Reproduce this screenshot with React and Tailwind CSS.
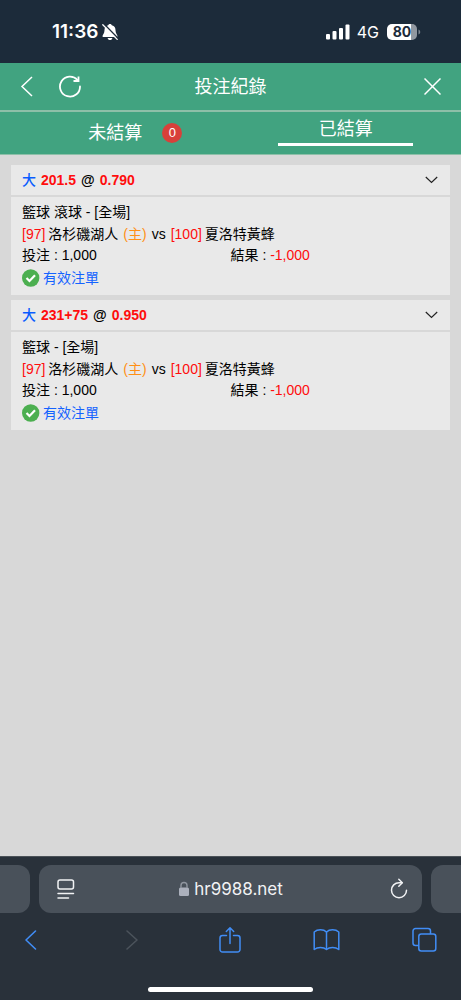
import { useState } from "react";

const bets = [
  {
    id: 1,
    pick: "大",
    line: "201.5",
    odds: "0.790",
    game: "籃球 滾球 - [全場]",
    home: "洛杉磯湖人",
    homeScore: "[97]",
    away: "夏洛特黃蜂",
    awayScore: "[100]",
    stake: "1,000",
    result: "-1,000",
  },
  {
    id: 2,
    pick: "大",
    line: "231+75",
    odds: "0.950",
    game: "籃球 - [全場]",
    home: "洛杉磯湖人",
    homeScore: "[97]",
    away: "夏洛特黃蜂",
    awayScore: "[100]",
    stake: "1,000",
    result: "-1,000",
  },
];

function StatusBar() {
  return (
    <div className="flex h-[63px] items-center justify-between bg-[#1c2b3a] pl-[52px] pr-10 font-['Inter',sans-serif] text-white">
      <div className="flex items-center gap-1">
        <span className="text-[19px] font-semibold leading-5">11:36</span>
        {/* Silent bell */}
        <svg width="16" height="18" viewBox="0 0 16 18">
          <path
            d="M8 1C7 1 6.400 1.600 6.200 2.300C3.500 3 2.500 4.900 2.500 7.200C2.500 10.400 0.800 11.600 0.500 13C0.500 13.700 0.800 14 1.500 14H14.500C15.200 14 15.500 13.700 15.500 13C15.200 11.600 13.500 10.400 13.500 7.200C13.500 4.900 12.500 3 9.800 2.300C9.600 1.600 9 1 8 1Z"
            fill="currentColor"
          />
          <path d="M5.600 15H10.400C10.100 16.400 9.200 17 8 17C6.800 17 5.900 16.400 5.600 15Z" fill="currentColor" />
          <path d="M1.800 0.800L16 15.200" stroke="#1c2b3a" strokeWidth="1.500" />
          <path d="M0.800 1.800L15.200 16.400" stroke="currentColor" strokeWidth="1.300" strokeLinecap="round" />
        </svg>
      </div>
      <div className="flex items-center">
        <svg width="24" height="16" viewBox="0 0 24 16" fill="currentColor">
          <rect x="0" y="10" width="4" height="5.500" rx="1" />
          <rect x="6.500" y="7" width="4" height="8.500" rx="1" />
          <rect x="13" y="4" width="4" height="11.500" rx="1" />
          <rect x="19.500" y="0.500" width="4" height="15" rx="1" />
        </svg>
        <span className="ml-[7px] text-[16px] leading-5">4G</span>
        <div className="ml-2 flex h-4 w-[30px] items-center justify-center rounded-[5px] bg-linear-to-r from-white from-80% to-[#9198a0] to-80% text-[14px] font-bold leading-4 text-[#1c2b3a]">
          80
        </div>
        <svg className="ml-px" width="3" height="6" viewBox="0 0 3 6">
          <path d="M0.500 0.500C2.800 1.500 2.800 4.500 0.500 5.500Z" fill="#7d868f" />
        </svg>
      </div>
    </div>
  );
}

function TopBar() {
  return (
    <header className="grid h-[49px] grid-cols-3 items-center border-b-2 border-[#8dbfa8] bg-[#41a380] px-5 text-white">
      <div className="flex items-center gap-6">
        <button type="button" aria-label="返回">
          <svg width="14" height="24" viewBox="0 0 14 24" fill="none" stroke="currentColor" strokeWidth="1.500">
            <path d="M12 2L2 11.500L12 21" />
          </svg>
        </button>
        <button type="button" aria-label="重新整理">
          <svg width="24" height="24" viewBox="0 0 24 24" fill="none" stroke="currentColor" strokeWidth="1.800">
            <path d="M22 11.500A10 10 0 1 1 19.500 5" strokeLinecap="round" />
            <path d="M20.500 1.500V6H15.500" />
          </svg>
        </button>
      </div>
      <h1 className="whitespace-nowrap text-center text-[18px] leading-6">投注紀錄</h1>
      <button type="button" aria-label="關閉" className="justify-self-end">
        <svg width="17" height="18" viewBox="0 0 17 18" fill="none" stroke="currentColor" strokeWidth="1.500">
          <path d="M0.500 0.500L16.500 16.500M16.500 0.500L0.500 16.500" />
        </svg>
      </button>
    </header>
  );
}

function Tabs({ active, onChange }) {
  return (
    <nav className="grid h-[43px] grid-cols-2 border-b border-[#8dbfa8] bg-[#41a380] text-[18px] leading-6 text-white">
      <button type="button" onClick={() => onChange("open")} className="flex flex-col items-center pt-[9px]">
        <span className="relative">
          未結算
          <span className="absolute left-full top-0.5 ml-5 flex size-5 items-center justify-center rounded-full bg-[#d8403a] text-[13px] leading-5">
            0
          </span>
        </span>
        {active === "open" && <span className="h-[3px] w-[135px] bg-white" />}
      </button>
      <button type="button" onClick={() => onChange("settled")} className="flex flex-col items-center gap-0.5 pt-[5px]">
        <span>已結算</span>
        {active === "settled" && <span className="h-[3px] w-[135px] bg-white" />}
      </button>
    </nav>
  );
}

function BetCard({ bet }) {
  const [open, setOpen] = useState(true);

  return (
    <article className="text-[14px] text-black">
      <button
        type="button"
        onClick={() => setOpen(!open)}
        className="flex h-[30px] w-full items-center justify-between bg-[#e9e9e9] pl-[11px] pr-3"
      >
        <span className="flex gap-[5px] font-bold leading-5">
          <span className="font-medium text-[#0a5cff]">{bet.pick}</span>
          <span className="text-[#ff0d0d]">{bet.line}</span>
          <span>@</span>
          <span className="text-[#ff0d0d]">{bet.odds}</span>
        </span>
        <svg width="13" height="8" viewBox="0 0 13 8" fill="none" stroke="#222" strokeWidth="1.200">
          <path d="M0.800 1L6.500 6.500L12.200 1" />
        </svg>
      </button>
      {open && (
        <div className="mt-0.5 bg-[#e9e9e9] px-[11px] pb-[5px] pt-1">
          <p className="leading-[22px]">{bet.game}</p>
          <p className="flex leading-[22px]">
            <span className="mr-[3px] text-[#ff0d0d]">{bet.homeScore}</span>
            <span>{bet.home}</span>
            <span className="mx-[5px] text-[#ff9016]">(主)</span>
            <span>vs</span>
            <span className="ml-[5px] mr-[3px] text-[#ff0d0d]">{bet.awayScore}</span>
            <span>{bet.away}</span>
          </p>
          <div className="grid grid-cols-2 leading-[21px]">
            <p>投注 : {bet.stake}</p>
            <p>
              結果 : <span className="text-[#ff0d0d]">{bet.result}</span>
            </p>
          </div>
          <div className="flex h-6 items-center gap-[3px] text-[#1463ff]">
            <svg width="18" height="18" viewBox="0 0 18 18">
              <circle cx="8.700" cy="9" r="8.700" fill="#4caf50" />
              <path d="M4.500 9L7.500 12L13 6.300" fill="none" stroke="#fff" strokeWidth="2.200" />
            </svg>
            <span className="leading-[22px]">有效注單</span>
          </div>
        </div>
      )}
    </article>
  );
}

function BrowserBar() {
  return (
    <footer className="border-t border-[#4b5258] bg-[#29313a] pb-2 pt-2 font-['Inter',sans-serif]">
      {/* Address bar with the edges of the neighbouring tabs */}
      <div className="flex h-12 gap-[9px]">
        <div className="w-[30px] shrink-0 rounded-r-xl bg-[#49515a]" />
        <div className="grid flex-1 grid-cols-[1fr_auto_1fr] items-center rounded-xl bg-[#49515a] px-[14px] text-[#f1f2f4]">
          <button type="button" aria-label="頁面選單" className="justify-self-start">
            <svg width="24" height="24" viewBox="0 0 24 24" fill="none" stroke="currentColor" strokeWidth="1.500" strokeLinecap="round">
              <rect x="5" y="3" width="15.500" height="9" rx="2" />
              <path d="M5 16.500H20.500M5 21H15.500" />
            </svg>
          </button>
          <div className="flex items-center gap-1">
            <svg width="12" height="16" viewBox="0 0 12 16">
              <rect x="1" y="6.500" width="10" height="8.500" rx="1.500" fill="#abb0bc" />
              <path d="M3 7V4.500C3 0.500 9 0.500 9 4.500V7" fill="none" stroke="#8f959f" strokeWidth="1.400" />
            </svg>
            <span className="text-[17px] leading-6">hr9988.net</span>
          </div>
          <button type="button" aria-label="重新載入" className="justify-self-end">
            <svg width="18" height="22" viewBox="0 0 18 22" fill="none" stroke="currentColor" strokeWidth="1.500" strokeLinecap="round" strokeLinejoin="round">
              <path d="M12 4.700H9A7.500 7.500 0 1 0 16.500 12.200" />
              <path d="M8.800 1.200L12.300 4.700L8.800 8.200" />
            </svg>
          </button>
        </div>
        <div className="w-[30px] shrink-0 rounded-l-xl bg-[#49515a]" />
      </div>

      {/* Toolbar */}
      <div className="flex h-[54px] items-center justify-between px-6 text-[#418df5]">
        <button type="button" aria-label="上一頁">
          <svg width="14" height="24" viewBox="0 0 14 24" fill="none" stroke="currentColor" strokeWidth="1.600" strokeLinecap="round" strokeLinejoin="round">
            <path d="M11.500 3L2 12L11.500 21" />
          </svg>
        </button>
        <button type="button" aria-label="下一頁" className="ml-4 text-[#4b535b]">
          <svg width="14" height="24" viewBox="0 0 14 24" fill="none" stroke="currentColor" strokeWidth="1.600" strokeLinecap="round" strokeLinejoin="round">
            <path d="M2 3L12 12L2 21" />
          </svg>
        </button>
        <button type="button" aria-label="分享" className="ml-2">
          <svg width="24" height="28" viewBox="0 0 24 28" fill="none" stroke="currentColor" strokeWidth="1.500" strokeLinecap="round" strokeLinejoin="round">
            <path d="M8.500 9.500H4.500A2.500 2.500 0 0 0 2 12V23.500A2.500 2.500 0 0 0 4.500 26H19.500A2.500 2.500 0 0 0 22 23.500V12A2.500 2.500 0 0 0 19.500 9.500H15.500" />
            <path d="M12 17.500V2M8.300 5.500L12 1.800L15.700 5.500" />
          </svg>
        </button>
        <button type="button" aria-label="書籤">
          <svg width="28" height="24" viewBox="0 0 28 24" fill="none" stroke="currentColor" strokeWidth="1.500" strokeLinejoin="round">
            <path d="M14.500 4C11.500 1 5.500 1 2.200 4V21.500C5.500 18.800 11.500 18.800 14.500 21.500C17.500 18.800 23.500 18.800 26.800 21.500V4C23.500 1 17.500 1 14.500 4Z" />
            <path d="M14.500 4V21.500" />
          </svg>
        </button>
        <button type="button" aria-label="分頁">
          <svg width="26" height="26" viewBox="0 0 26 26" fill="none" stroke="currentColor" strokeWidth="1.500">
            <rect x="7.800" y="7" width="17" height="17" rx="2.500" />
            <path d="M7.800 18.500H4.500A2.500 2.500 0 0 1 2 16V4A2.500 2.500 0 0 1 4.500 1.500H17A2.500 2.500 0 0 1 19.500 4V7" />
          </svg>
        </button>
      </div>
      <div className="mx-auto mt-5 h-[5px] w-[165px] rounded-full bg-white" />
    </footer>
  );
}

export default function App() {
  const [tab, setTab] = useState("settled");

  return (
    <div className="flex min-h-screen flex-col bg-[#d8d8d8] font-['Liberation_Sans','Noto_Sans_CJK_TC',sans-serif]">
      <StatusBar />
      <TopBar />
      <Tabs active={tab} onChange={setTab} />
      <main className="flex flex-1 flex-col gap-[5px] px-[11px] py-2.5">
        {tab === "settled" && bets.map((bet) => <BetCard key={bet.id} bet={bet} />)}
      </main>
      <BrowserBar />
    </div>
  );
}
